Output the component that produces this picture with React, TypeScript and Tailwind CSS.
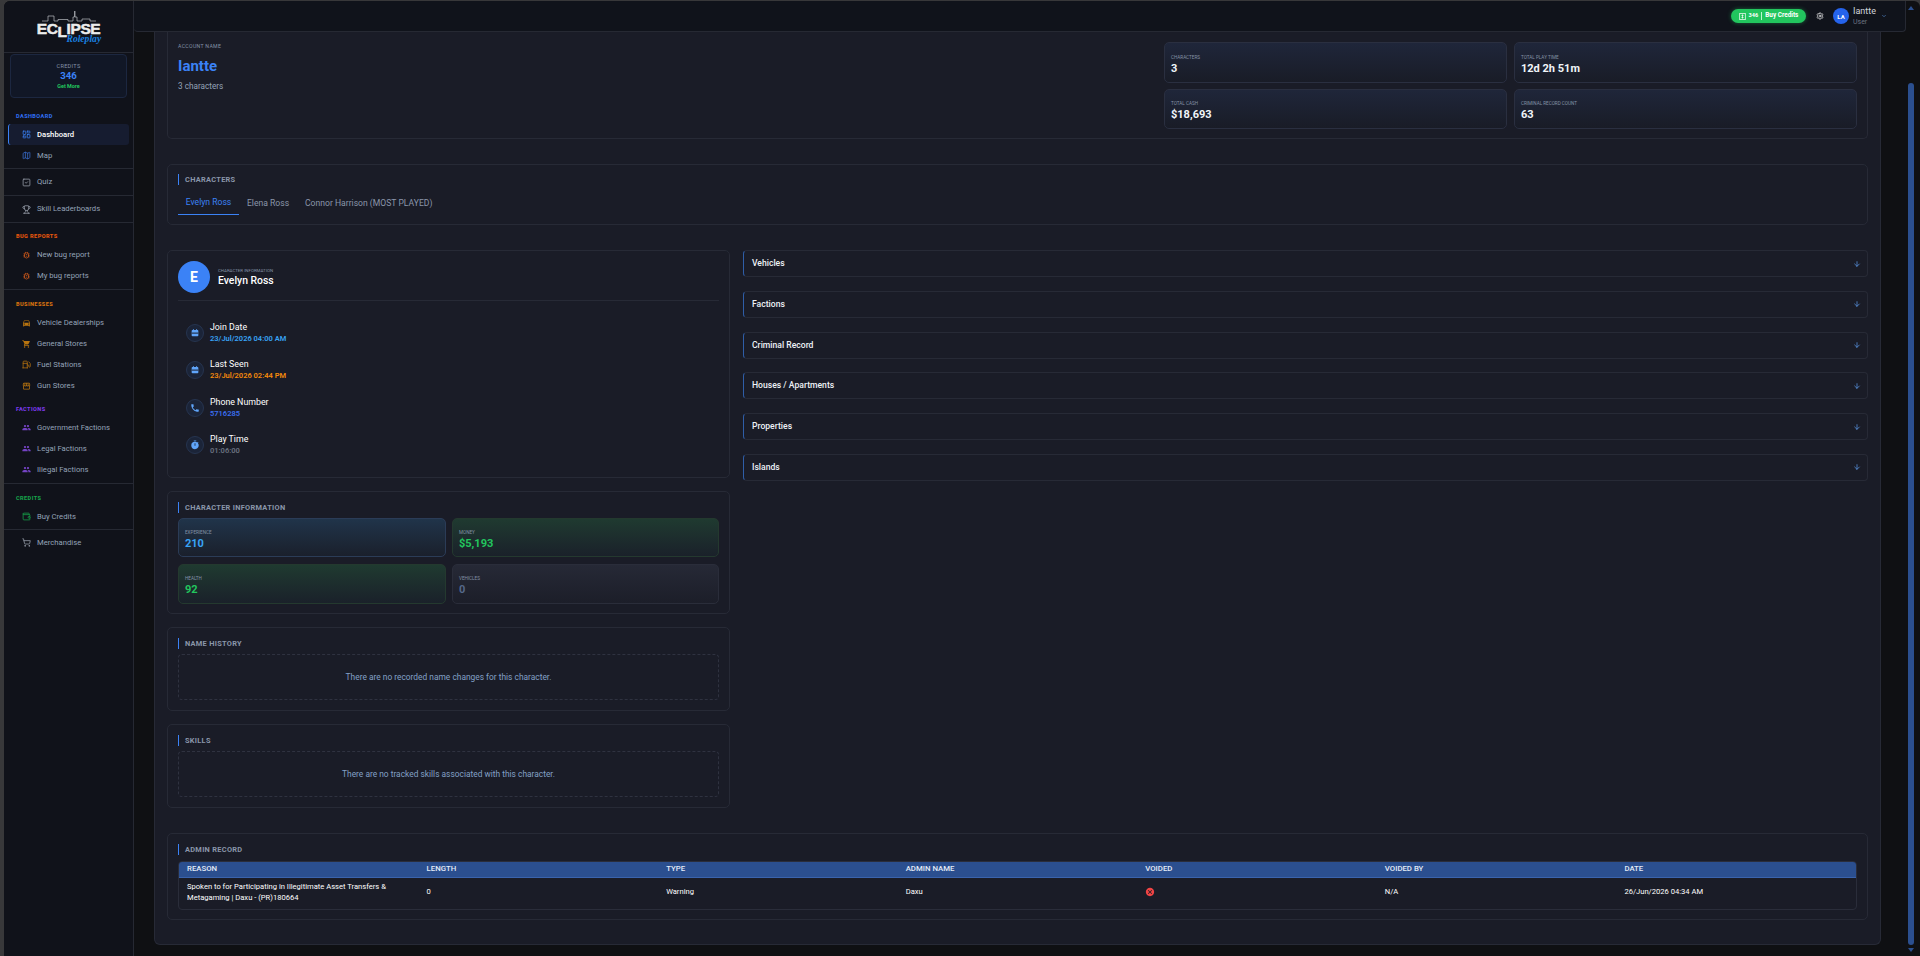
import {
  ArrowDown,
  ChevronDown,
  Fuel,
  LayoutDashboard,
  Map as MapIcon,
  Settings,
  ShoppingCart,
  SquareCheck,
  Trophy,
  Wallet,
} from "lucide-react";
import {
  MdCancel,
  MdDirectionsCar,
  MdOutlineBugReport,
  MdOutlineStorefront,
  MdPeople,
  MdPhone,
  MdShoppingCart,
  MdTimer,
} from "react-icons/md";
import type { ReactNode } from "react";

const NavItem = ({ icon, label, active }: { icon: ReactNode; label: string; active?: boolean }) => (
  <div
    className={`mx-[4px] flex h-[21px] items-center gap-[6px] rounded-[3px] text-[7.7px] ${
      active ? "border-l border-[#3b82f6] bg-[#161c30] pl-[13px] font-medium text-white" : "pl-[14px] text-[#94a3b8]"
    }`}
  >
    <span className="flex w-[9px] shrink-0 justify-center">{icon}</span>
    <span>{label}</span>
  </div>
);

const NavLabel = ({ children, color }: { children: ReactNode; color: string }) => (
  <div className={`ml-[12px] flex h-[10px] items-center text-[5.6px] font-extrabold uppercase tracking-[0.4px] ${color}`}>
    {children}
  </div>
);

const Divider = () => <div className="h-px bg-[#262933]" />;

const SectionTitle = ({ children }: { children: ReactNode }) => (
  <div className="flex h-[11px] items-center gap-[6px] border-l border-[#3b82f6] pl-[6px] text-[7.4px] font-bold uppercase tracking-[0.3px] text-[#8a96aa]">
    {children}
  </div>
);

const Tile = ({ label, value, box, tone }: { label: string; value: string; box: string; tone: string }) => (
  <div className={`flex flex-col justify-center rounded-[5px] border bg-gradient-to-b px-[6px] pt-[4px] ${box}`}>
    <div className="text-[4.6px] uppercase leading-[8px] text-[#8492a6]">{label}</div>
    <div className={`text-[11px] font-bold leading-[14px] ${tone}`}>{value}</div>
  </div>
);

const CalendarGlyph = () => (
  <svg viewBox="0 0 24 24" className="size-[10px]">
    <rect x="7" y="3" width="2.5" height="4" fill="currentColor" />
    <rect x="14.5" y="3" width="2.5" height="4" fill="currentColor" />
    <rect x="4" y="5" width="16" height="15" rx="2" fill="currentColor" />
    <rect x="4" y="11" width="16" height="2.5" fill="#1b2438" />
  </svg>
);

const InfoRow = ({ icon, title, value, tone }: { icon: ReactNode; title: string; value: string; tone: string }) => (
  <div className="flex h-[37.5px] items-center gap-[6px] pl-[8px]">
    <div className="flex size-[18px] items-center justify-center rounded-full border border-[#26344f] bg-[#1b2438] text-[#60a5fa]">
      {icon}
    </div>
    <div>
      <div className="text-[8.8px] leading-[11px] text-white">{title}</div>
      <div className={`text-[7.5px] font-semibold leading-[11px] ${tone}`}>{value}</div>
    </div>
  </div>
);

const accordions = ["Vehicles", "Factions", "Criminal Record", "Houses / Apartments", "Properties", "Islands"];
const cols = ["Reason", "Length", "Type", "Admin Name", "Voided", "Voided By", "Date"];

const Sidebar = () => (
  <aside className="flex h-full w-[130px] shrink-0 flex-col border-r border-[#262933] bg-[#10121a]">
    <div className="flex h-[52px] shrink-0 items-center justify-center border-b border-[#262933]">
      <div className="relative h-[34px] w-[66px]">
        <svg viewBox="0 0 54 12" className="mx-auto h-[12px] w-[54px]" fill="none" stroke="#b9bcc2" strokeWidth="0.7">
          <path d="M0 11h6V6h6v5h4V9.5h10V11h5V7h1.5V1M33 1v6H35v4h5V9h8v2h6" />
        </svg>
        <div className="text-center text-[15.5px] font-black leading-[14px] tracking-[-0.4px] text-[#ececec] [-webkit-text-stroke:0.5px_#ececec] [font-family:'Liberation_Sans',sans-serif]">
          EC<span className="relative top-[3px]">L</span>IPSE
        </div>
        <div className="absolute left-[31px] top-[22px] text-[9.6px] font-bold italic text-[#1a80e0] [font-family:'Liberation_Serif',serif]">
          Roleplay
        </div>
      </div>
    </div>
    <div className="mx-[6px] mt-[1px] flex h-[44px] shrink-0 flex-col items-center justify-center rounded-[4px] border border-[#1c2740] bg-[#111726]">
      <div className="text-[5.6px] uppercase leading-[8px] tracking-[0.3px] text-[#8492a6]">Credits</div>
      <div className="text-[9.6px] font-bold leading-[12px] text-[#3b82f6]">346</div>
      <div className="text-[5.4px] font-bold leading-[8px] text-[#22c55e]">Get More</div>
    </div>
    <div className="mt-[13px]">
      <NavLabel color="text-[#2f6cf0]">Dashboard</NavLabel>
    </div>
    <div className="mt-[3px]">
      <NavItem active label="Dashboard" icon={<LayoutDashboard size={9} className="text-[#3b82f6]" />} />
      <NavItem label="Map" icon={<MapIcon size={9} className="text-[#3b6fd0]" />} />
    </div>
    <div className="mt-[2px]">
      <Divider />
    </div>
    <div className="py-[2.5px]">
      <NavItem label="Quiz" icon={<SquareCheck size={9} className="text-[#9ca3af]" />} />
    </div>
    <Divider />
    <div className="py-[2.5px]">
      <NavItem label="Skill Leaderboards" icon={<Trophy size={9} className="text-[#9ca3af]" />} />
    </div>
    <Divider />
    <div className="mt-[8px]">
      <NavLabel color="text-[#ea580c]">Bug Reports</NavLabel>
    </div>
    <div className="mt-[3px]">
      <NavItem label="New bug report" icon={<MdOutlineBugReport size={10} className="text-[#c2541a]" />} />
      <NavItem label="My bug reports" icon={<MdOutlineBugReport size={10} className="text-[#c2541a]" />} />
    </div>
    <div className="mt-[3px]">
      <Divider />
    </div>
    <div className="mt-[9px]">
      <NavLabel color="text-[#d9730f]">Businesses</NavLabel>
    </div>
    <div className="mt-[3px]">
      <NavItem label="Vehicle Dealerships" icon={<MdDirectionsCar size={10} className="text-[#b8740f]" />} />
      <NavItem label="General Stores" icon={<MdShoppingCart size={10} className="text-[#b8740f]" />} />
      <NavItem label="Fuel Stations" icon={<Fuel size={9} className="text-[#b8740f]" />} />
      <NavItem label="Gun Stores" icon={<MdOutlineStorefront size={10} className="text-[#b8740f]" />} />
    </div>
    <div className="mt-[8px]">
      <NavLabel color="text-[#7c3aed]">Factions</NavLabel>
    </div>
    <div className="mt-[3px]">
      <NavItem label="Government Factions" icon={<MdPeople size={11} className="text-[#7443c4]" />} />
      <NavItem label="Legal Factions" icon={<MdPeople size={11} className="text-[#7443c4]" />} />
      <NavItem label="Illegal Factions" icon={<MdPeople size={11} className="text-[#7443c4]" />} />
    </div>
    <div className="mt-[3px]">
      <Divider />
    </div>
    <div className="mt-[9px]">
      <NavLabel color="text-[#16a34a]">Credits</NavLabel>
    </div>
    <div className="mt-[3px]">
      <NavItem label="Buy Credits" icon={<Wallet size={9} className="text-[#16a34a]" />} />
    </div>
    <div className="mt-[2px]">
      <Divider />
    </div>
    <div className="mt-[2px]">
      <NavItem label="Merchandise" icon={<ShoppingCart size={9} className="text-[#9ca3af]" />} />
    </div>
  </aside>
);

const Topbar = () => (
  <header className="flex h-[31px] shrink-0 items-center justify-end rounded-b-[4px] border-b border-r border-[#262933] bg-[#10131b] pr-[18px]">
    <div className="flex h-[14px] w-[75px] items-center justify-center gap-[3px] rounded-full bg-[#22c55e] text-[6.4px] font-bold text-white shadow-[0_0_4px_rgba(34,197,94,0.45)]">
      <svg viewBox="0 0 10 10" className="size-[7px]" fill="none" stroke="currentColor" strokeWidth="1">
        <rect x="1" y="0.5" width="8" height="9" />
        <path d="M5 2v6M3.5 3.5h3M3.5 6.5h3" />
      </svg>
      <span className="-mt-[2px] text-[5.6px]">346</span>
      <span className="h-[8px] w-px bg-[#bbf7d0]" />
      <span>Buy Credits</span>
    </div>
    <Settings size={8} className="ml-[10px] text-white" />
    <div className="ml-[9px] flex size-[16px] items-center justify-center rounded-full bg-[#2563eb] text-[6px] font-bold text-white">
      LA
    </div>
    <div className="ml-[4px] w-[28px]">
      <div className="text-[9px] leading-[11px] text-[#d1d5db]">Iantte</div>
      <div className="text-[7px] leading-[10px] text-[#6b7280]">User</div>
    </div>
    <ChevronDown size={6} className="text-[#60a5fa]" />
  </header>
);

const AccountCard = () => (
  <section className="flex h-[107px] rounded-b-[5px] border border-t-0 border-[#272a36] pl-[10px] pr-[10px]">
    <div className="w-[986px] pt-[10px]">
      <div className="text-[5.2px] uppercase leading-[8px] tracking-[0.3px] text-[#8492a6]">Account Name</div>
      <div className="mt-[7px] text-[15px] font-bold leading-[19px] text-[#3b82f6]">Iantte</div>
      <div className="mt-[5px] text-[8.2px] leading-[10px] text-[#94a3b8]">3 characters</div>
    </div>
    <div className="grid flex-1 grid-cols-2 grid-rows-[41px_40px] gap-x-[7px] gap-y-[6px] pt-[10px]">
      {[
        ["Characters", "3"],
        ["Total Play Time", "12d 2h 51m"],
        ["Total Cash", "$18,693"],
        ["Criminal Record Count", "63"],
      ].map(([label, value]) => (
        <Tile key={label} label={label} value={value} tone="text-[#f1f5f9]" box="border-[#2a2f40] from-[#1f263a] to-[#191c27]" />
      ))}
    </div>
  </section>
);

const CharactersCard = () => (
  <section className="mt-[25px] h-[61px] rounded-[5px] border border-[#272a36] px-[10px] pt-[9px]">
    <SectionTitle>Characters</SectionTitle>
    <div className="mt-[6px] flex text-[8.6px] text-[#8a96aa]">
      <div className="flex h-[24px] w-[61px] items-center justify-center border-b border-[#3b82f6] text-[#3b82f6]">Evelyn Ross</div>
      <div className="flex h-[24px] w-[58px] items-center justify-center">Elena Ross</div>
      <div className="flex h-[24px] items-center pl-[8px]">Connor Harrison (MOST PLAYED)</div>
    </div>
  </section>
);

const LeftColumn = () => (
  <div className="flex w-[563px] shrink-0 flex-col gap-[13px]">
    <section className="h-[228px] rounded-[5px] border border-[#272a36] px-[10px] pt-[10px]">
      <div className="flex h-[40px] items-start gap-[8px] border-b border-[#272a36]">
        <div className="flex size-[32px] items-center justify-center rounded-full bg-[#3b82f6] text-[14px] font-bold text-white">E</div>
        <div className="pt-[7px]">
          <div className="text-[4.4px] uppercase leading-[6px] text-[#8492a6]">Character Information</div>
          <div className="text-[10.4px] font-medium leading-[13px] text-white">Evelyn Ross</div>
        </div>
      </div>
      <div className="pt-[13px]">
        <InfoRow icon={<CalendarGlyph />} title="Join Date" value="23/Jul/2026 04:00 AM" tone="text-[#38a3f5]" />
        <InfoRow icon={<CalendarGlyph />} title="Last Seen" value="23/Jul/2026 02:44 PM" tone="text-[#f58a0b]" />
        <InfoRow icon={<MdPhone size={10} />} title="Phone Number" value="5716285" tone="text-[#3b6ff0]" />
        <InfoRow icon={<MdTimer size={10} />} title="Play Time" value="01:06:00" tone="text-[#6b7280]" />
      </div>
    </section>

    <section className="h-[123px] rounded-[5px] border border-[#272a36] px-[10px] pt-[10px]">
      <SectionTitle>Character Information</SectionTitle>
      <div className="mt-[5px] grid grid-cols-[268px_267px] grid-rows-[39px_40px] gap-x-[6px] gap-y-[7px]">
        <Tile label="Experience" value="210" tone="text-[#38a3f5]" box="border-[#2b3c57] from-[#20344a] to-[#1a202c]" />
        <Tile label="Money" value="$5,193" tone="text-[#22c55e]" box="border-[#24392f] from-[#1f3a30] to-[#1a212a]" />
        <Tile label="Health" value="92" tone="text-[#22c55e]" box="border-[#24392f] from-[#1f3a30] to-[#1a212a]" />
        <Tile label="Vehicles" value="0" tone="text-[#55688a]" box="border-[#2a2d3a] from-[#262936] to-[#1c1e29]" />
      </div>
    </section>

    <section className="h-[84px] rounded-[5px] border border-[#272a36] px-[10px] pt-[10px]">
      <SectionTitle>Name History</SectionTitle>
      <div className="mt-[5px] flex h-[46px] items-center justify-center rounded-[4px] border border-dashed border-[#2f3240] text-[8.4px] text-[#83a0c6]">
        There are no recorded name changes for this character.
      </div>
    </section>

    <section className="h-[84px] rounded-[5px] border border-[#272a36] px-[10px] pt-[10px]">
      <SectionTitle>Skills</SectionTitle>
      <div className="mt-[5px] flex h-[46px] items-center justify-center rounded-[4px] border border-dashed border-[#2f3240] text-[8.4px] text-[#83a0c6]">
        There are no tracked skills associated with this character.
      </div>
    </section>
  </div>
);

const RightColumn = () => (
  <div className="flex flex-1 flex-col gap-[13.8px]">
    {accordions.map((name) => (
      <div
        key={name}
        className="flex h-[27px] items-center justify-between rounded-[4px] border border-[#272a36] border-l-[#2f5ea8] pl-[8px] pr-[6px] text-[8.6px] font-medium text-[#eef2f7]"
      >
        <span>{name}</span>
        <ArrowDown size={8} className="text-[#60a5fa]" />
      </div>
    ))}
  </div>
);

const AdminRecord = () => (
  <section className="mt-[25px] h-[87px] rounded-[5px] border border-[#272a36] px-[10px] pt-[10px]">
    <SectionTitle>Admin Record</SectionTitle>
    <div className="mt-[6px] overflow-hidden rounded-[4px] border border-[#2a2d3a]">
      <table className="w-full table-fixed border-collapse text-left">
        <thead>
          <tr className="h-[15px] border-b border-[#3a63ac] bg-[#2b4f8f] text-[7.8px] uppercase text-[#e5ecf7]">
            {cols.map((c) => (
              <th key={c} className="px-[8px] font-medium">
                {c}
              </th>
            ))}
          </tr>
        </thead>
        <tbody>
          <tr className="h-[32px] text-[7.6px] text-white">
            <td className="px-[8px] pb-[3px] leading-[11px]">Spoken to for Participating in Illegitimate Asset Transfers &amp; Metagaming | Daxu - (PR)180664</td>
            <td className="px-[8px] pb-[3px]">0</td>
            <td className="px-[8px] pb-[3px]">Warning</td>
            <td className="px-[8px] pb-[3px]">Daxu</td>
            <td className="px-[8px] pb-[3px]">
              <MdCancel size={10} className="text-[#ef4444]" />
            </td>
            <td className="px-[8px] pb-[3px]">N/A</td>
            <td className="px-[8px] pb-[3px]">26/Jun/2026 04:34 AM</td>
          </tr>
        </tbody>
      </table>
    </div>
  </section>
);

const Scrollbar = () => (
  <div className="flex w-[14px] shrink-0 flex-col items-center pr-[4px]">
    <div className="mt-[5px] size-0 border-x-[3px] border-b-[4px] border-x-transparent border-b-[#2b4f8f]" />
    <div className="mt-[73px] h-[862px] w-[6px] rounded-full bg-[#2b4f8f]" />
    <div className="mt-[3px] size-0 border-x-[3px] border-t-[4px] border-x-transparent border-t-[#2b4f8f]" />
  </div>
);

export default function App() {
  return (
    <div className="h-[956px] w-[1920px] overflow-hidden bg-[#38383a] pl-[4px] pt-px text-white [font-family:Roboto,sans-serif]">
      <div className="flex h-full overflow-hidden rounded-t-[6px] bg-[#0f1013]">
        <Sidebar />
        <div className="flex w-[1772px] shrink-0 flex-col">
          <Topbar />
          <main className="ml-[20px] h-[913px] w-[1727px] rounded-b-[6px] border-x border-b border-[#272a36] bg-[#1a1c27] pl-[12px] pr-[12px]">
            <AccountCard />
            <CharactersCard />
            <div className="mt-[25px] flex gap-[13px]">
              <LeftColumn />
              <RightColumn />
            </div>
            <AdminRecord />
          </main>
        </div>
        <Scrollbar />
      </div>
    </div>
  );
}
